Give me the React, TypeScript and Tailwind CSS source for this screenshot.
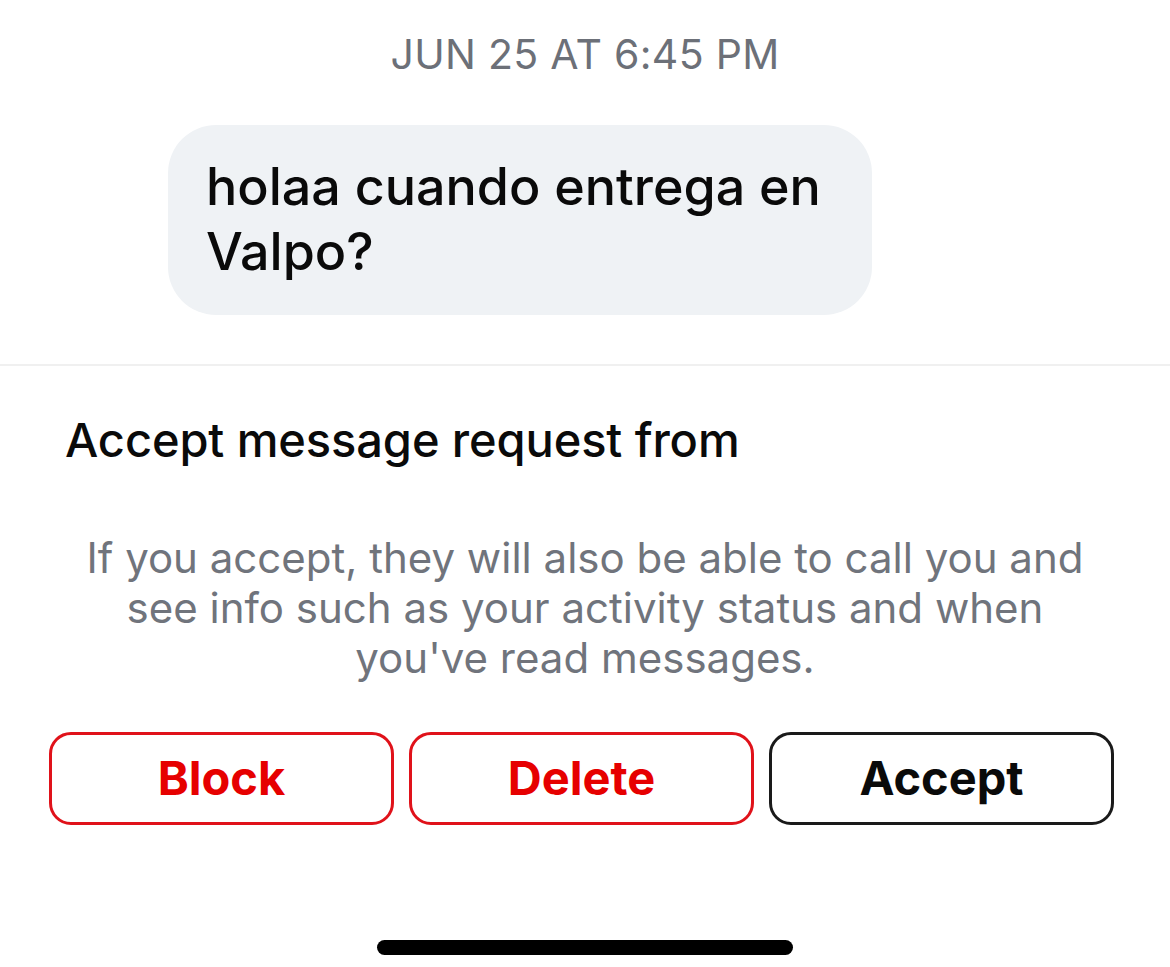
export default function App() {
  return (
    <div
      className="w-[1170px] h-[967px] bg-white flex flex-col overflow-hidden"
      style={{ fontFamily: "Inter, 'Noto Sans', sans-serif" }}
    >
      {/* Timestamp */}
      <div className="pt-[30px] text-center text-[#6c7078] text-[41px] leading-[48px] tracking-[0.3px]">
        JUN 25 AT 6:45 PM
      </div>

      {/* Incoming message */}
      <div className="pl-[168px] pt-[47px]">
        <div className="w-[704px] h-[190px] rounded-[48px] bg-[#eff2f5] pl-[38px] pr-[20px] pt-[29px]">
          <p className="text-[#0a0a0a] text-[52px] leading-[65px] font-medium tracking-[0px]">
            holaa cuando entrega en Valpo?
          </p>
        </div>
      </div>

      <div className="mt-[49px] h-[2px] bg-[#f0f0f0]" />

      {/* Request prompt */}
      <div className="px-[65px] pt-[46px]">
        <h2 className="text-[#0a0a0a] text-[47px] leading-[56px] font-medium tracking-[-0.1px]">
          Accept message request from
        </h2>
      </div>

      <p className="mt-[65px] px-[60px] text-center text-[#70747c] text-[42px] leading-[50px]">
        If you accept, they will also be able to call you and see info such as your activity status and when you've read messages.
      </p>

      {/* Actions */}
      <div className="mt-[49px] pl-[49px] pr-[56px] grid grid-cols-3 gap-[15px]">
        <button className="h-[93px] rounded-[22px] border-[3px] border-[#e0121a] text-[#e60000] text-[47px] font-bold">
          Block
        </button>
        <button className="h-[93px] rounded-[22px] border-[3px] border-[#e0121a] text-[#e60000] text-[47px] font-bold">
          Delete
        </button>
        <button className="h-[93px] rounded-[22px] border-[3px] border-[#1a1a1a] text-[#0a0a0a] text-[47px] font-bold">
          Accept
        </button>
      </div>

      {/* Home indicator */}
      <div className="mt-auto mb-[12px] flex justify-center">
        <div className="w-[416px] h-[15px] rounded-full bg-black" />
      </div>
    </div>
  );
}
